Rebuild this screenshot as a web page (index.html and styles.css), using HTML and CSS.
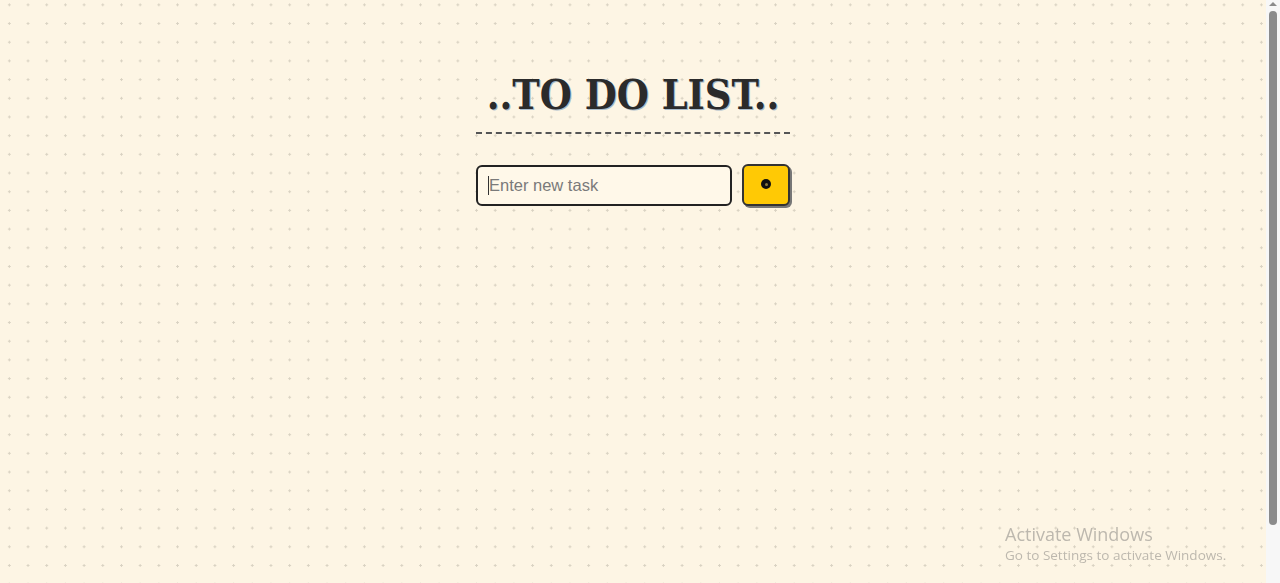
FILE: index.html
```html
<!DOCTYPE html>
<html lang="en">
<head>
<meta charset="utf-8">
<title>To Do List</title>
<link rel="stylesheet" href="styles.css">
</head>
<body>
<div class="page">
  <main class="main">
    <div class="todo">
      <h1 class="title">..TO DO LIST..</h1>
      <div class="form">
        <div class="task-input"><span class="caret"></span><span class="placeholder">Enter new task</span></div>
        <button class="add-btn" type="button" aria-label="Add task"><span class="dot"></span></button>
      </div>
    </div>
  </main>
  <div class="scrollbar">
    <div class="arrow"></div>
    <div class="thumb"></div>
  </div>
</div>
<div class="watermark">
  <div class="wm-title">Activate Windows</div>
  <div class="wm-sub">Go to Settings to activate Windows.</div>
</div>
</body>
</html>
```
FILE: styles.css
```css
html, body {
  margin: 0;
  padding: 0;
  height: 100%;
  overflow: hidden;
}
body {
  background-color: #fdf5e4;
  font-family: "Liberation Sans", Arial, sans-serif;
}
.page {
  display: flex;
  height: 583px;
}
.main {
  flex: 1;
  display: flex;
  justify-content: center;
  background-color: #fdf5e4;
  background-image: radial-gradient(circle, #d9d2c2 1px, transparent 1.3px);
  background-size: 18.7px 18.7px;
  background-position: 0px -4.5px;
}
.todo {
  width: 314px;
  padding-top: 68px;
  display: flex;
  flex-direction: column;
}
.title {
  margin: 0;
  font-family: "DejaVu Serif Condensed", "DejaVu Serif", serif;
  font-stretch: condensed;
  font-weight: bold;
  font-size: 41px;
  line-height: 54px;
  letter-spacing: 0;
  white-space: nowrap;
  color: #2b2b2b;
  text-align: center;
  text-shadow: 1px 1px 0 #a9bccc;
  border-bottom: 2px dashed #555;
  padding-bottom: 10px;
}
.form {
  display: flex;
  gap: 10px;
  margin-top: 31px;
}
.task-input {
  width: 256px;
  height: 41px;
  box-sizing: border-box;
  border: 2px solid #222;
  border-radius: 6px;
  background: #fff8e9;
  display: flex;
  align-items: center;
  padding-left: 10px;
  font-size: 16.5px;
}
.caret {
  width: 1px;
  height: 19px;
  background: #333;
}
.placeholder {
  color: #7a7a7a;
}
.add-btn {
  width: 48px;
  height: 42px;
  box-sizing: border-box;
  border: 2px solid #333;
  border-radius: 6px;
  background: #ffc905;
  box-shadow: 2px 2px 0 #777;
  display: flex;
  align-items: center;
  justify-content: center;
  padding: 0;
  margin-top: -1px;
}
.dot {
  width: 10px;
  height: 10px;
  border-radius: 50%;
  background: #111;
  position: relative;
  margin-top: -2px;
}
.dot::after {
  content: "";
  position: absolute;
  left: 3.5px;
  top: 3.5px;
  width: 3px;
  height: 3px;
  border-radius: 50%;
  background: #8a7a40;
}
.scrollbar {
  width: 14px;
  background: #f7f7f7;
  display: flex;
  flex-direction: column;
  align-items: center;
}
.arrow {
  margin-top: 2px;
  width: 0;
  height: 0;
  border-left: 4px solid transparent;
  border-right: 4px solid transparent;
  border-bottom: 4px solid #8b8b8b;
}
.thumb {
  margin-top: 5px;
  width: 8px;
  height: 514px;
  border-radius: 4px;
  background: #8b8b8b;
}
.watermark {
  position: fixed;
  left: 1005px;
  top: 523px;
  font-family: "Open Sans", "Noto Sans", sans-serif;
  color: #bdb8ae;
}
.wm-title {
  font-size: 18px;
  line-height: 22px;
}
.wm-sub {
  font-size: 13.5px;
  line-height: 18px;
  margin-top: 1px;
}
```
